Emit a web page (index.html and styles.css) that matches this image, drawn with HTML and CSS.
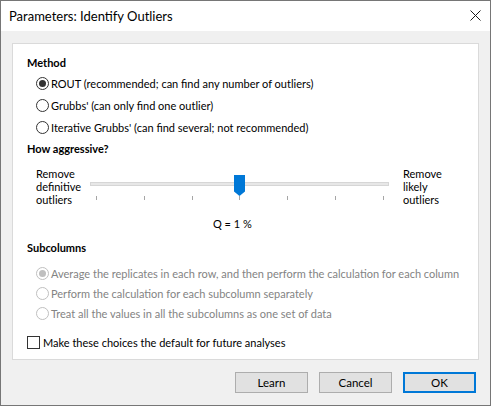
FILE: index.html
```html
<!DOCTYPE html>
<html lang="en">
<head>
  <meta charset="UTF-8" />
  <title>Parameters: Identify Outliers</title>
  <link rel="stylesheet" href="styles.css">
</head>
<body>
  <div class="window">
    <div class="title-bar">
      <span class="title-text">Parameters: Identify Outliers</span>
      <svg class="close-icon" width="11" height="11" viewBox="0 0 11 11">
        <path d="M0.5 0.5 L10.5 10.5 M10.5 0.5 L0.5 10.5" stroke="#1a1a1a" stroke-width="1" fill="none"/>
      </svg>
    </div>

    <div class="dialog-body">
      <div class="panel">
        <div class="section-title">Method</div>
        <div class="radio-list">
          <label class="radio-row">
            <svg class="radio" width="13" height="13" viewBox="0 0 13 13"><circle cx="6.5" cy="6.5" r="6" fill="#fff" stroke="#333" /><circle cx="6.5" cy="6.5" r="3.5" fill="#333" /></svg>
            ROUT (recommended; can find any number of outliers)
          </label>
          <label class="radio-row">
            <svg class="radio" width="13" height="13" viewBox="0 0 13 13"><circle cx="6.5" cy="6.5" r="6" fill="#fff" stroke="#333" /></svg>
            Grubbs' (can only find one outlier)
          </label>
          <label class="radio-row">
            <svg class="radio" width="13" height="13" viewBox="0 0 13 13"><circle cx="6.5" cy="6.5" r="6" fill="#fff" stroke="#333" /></svg>
            Iterative Grubbs' (can find several; not recommended)
          </label>
        </div>

        <div class="section-title aggressive">How aggressive?</div>
        <div class="slider-block">
          <div class="slider-label">
            <div>Remove</div>
            <div>definitive</div>
            <div>outliers</div>
          </div>
          <div class="slider">
            <div class="track"></div>
            <svg class="thumb" width="11" height="21" viewBox="0 0 11 21"><path d="M0 0 H11 V16.5 L5.5 21 L0 16.5 Z" fill="#0078d7"/></svg>
            <div class="ticks">
              <span></span><span></span><span></span><span></span><span></span><span></span><span></span>
            </div>
          </div>
          <div class="slider-label right">
            <div>Remove</div>
            <div>likely</div>
            <div>outliers</div>
          </div>
        </div>
        <div class="q-value">Q = 1 %</div>

        <div class="section-title subcolumns">Subcolumns</div>
        <div class="radio-list disabled">
          <label class="radio-row small">
            <svg class="radio" width="13" height="13" viewBox="0 0 13 13"><circle cx="6.5" cy="6.5" r="6" fill="#fff" stroke="#bfbfbf" /><circle cx="6.5" cy="6.5" r="3.5" fill="#bfbfbf" /></svg>
            Average the replicates in each row, and then perform the calculation for each column
          </label>
          <label class="radio-row small">
            <svg class="radio" width="13" height="13" viewBox="0 0 13 13"><circle cx="6.5" cy="6.5" r="6" fill="#fff" stroke="#bfbfbf" /></svg>
            Perform the calculation for each subcolumn separately
          </label>
          <label class="radio-row small">
            <svg class="radio" width="13" height="13" viewBox="0 0 13 13"><circle cx="6.5" cy="6.5" r="6" fill="#fff" stroke="#bfbfbf" /></svg>
            Treat all the values in all the subcolumns as one set of data
          </label>
        </div>

        <label class="check-row">
          <span class="checkbox"></span>
          Make these choices the default for future analyses
        </label>
      </div>

      <div class="button-row">
        <button class="btn">Learn</button>
        <button class="btn">Cancel</button>
        <button class="btn btn-default">OK</button>
      </div>
    </div>
  </div>
</body>
</html>
```

FILE: styles.css
```css
body {
  margin: 0;
  font-family: Lato, "Liberation Sans", Arial, sans-serif;
  font-size: 11px;
  color: #000;
  background-color: #fff;
}

.window {
  width: 491px;
  height: 406px;
  box-sizing: border-box;
  border: 1px solid #767676;
  display: flex;
  flex-direction: column;
  background-color: #f0f0f0;
}

.title-bar {
  height: 30px;
  background-color: #fff;
  display: flex;
  align-items: center;
  justify-content: space-between;
  padding: 0 9px 0 8px;
  flex-shrink: 0;
}

.title-text {
  font-size: 13px;
  color: #000;
}

.close-icon {
  margin-top: -1px;
}

.dialog-body {
  flex: 1;
  display: flex;
  flex-direction: column;
  padding: 12px 11px 0 11px;
}

.panel {
  background-color: #fff;
  border: 1px solid #dadada;
  height: 317px;
  box-sizing: border-box;
  padding: 11px 0 0 14px;
  display: flex;
  flex-direction: column;
}

.section-title {
  font-weight: bold;
  line-height: 16px;
  height: 16px;
}

.radio-list {
  margin-top: 1px;
  padding-left: 9px;
  display: flex;
  flex-direction: column;
}

.radio-row {
  display: flex;
  align-items: center;
  gap: 2px;
  height: 22px;
  white-space: nowrap;
}

.radio-row.small {
  height: 20px;
}

.radio {
  flex-shrink: 0;
}

.disabled {
  color: #838383;
}

.aggressive {
  margin-top: 3px;
}

.slider-block {
  margin-top: 10px;
  padding-left: 9px;
  display: flex;
  height: 39px;
}

.slider-label {
  width: 54px;
}

.slider-label div {
  height: 13px;
  line-height: 13px;
}

.slider-label.right {
  margin-left: 14px;
}

.slider {
  position: relative;
  width: 299px;
}

.track {
  margin-top: 15px;
  height: 4px;
  box-sizing: border-box;
  background-color: #e7e7e7;
  border: 1px solid #d6d6d6;
}

.thumb {
  position: absolute;
  left: 144px;
  top: 8px;
}

.ticks {
  margin-top: 10px;
  padding: 0 5px 0 6px;
  display: flex;
  justify-content: space-between;
}

.ticks span {
  width: 1px;
  height: 4px;
  background-color: #a6a6a6;
}

.q-value {
  margin-top: 10px;
  line-height: 16px;
  padding-left: 186px;
}

.subcolumns {
  margin-top: 8px;
}

.subcolumns + .radio-list {
  margin-top: 7px;
}

.check-row {
  margin-top: 11px;
  display: flex;
  align-items: center;
  gap: 3px;
  height: 16px;
}

.checkbox {
  width: 13px;
  height: 13px;
  box-sizing: border-box;
  border: 1px solid #333;
  background-color: #fff;
}

.button-row {
  display: flex;
  justify-content: flex-end;
  gap: 11px;
  padding: 12px 3px 0 0;
}

.btn {
  width: 73px;
  height: 21px;
  box-sizing: border-box;
  border: 1px solid #adadad;
  background-color: #e1e1e1;
  font-family: Lato, "Liberation Sans", Arial, sans-serif;
  font-size: 11.5px;
  color: #000;
  padding: 0;
}

.btn-default {
  border: 2px solid #0078d7;
}
```
